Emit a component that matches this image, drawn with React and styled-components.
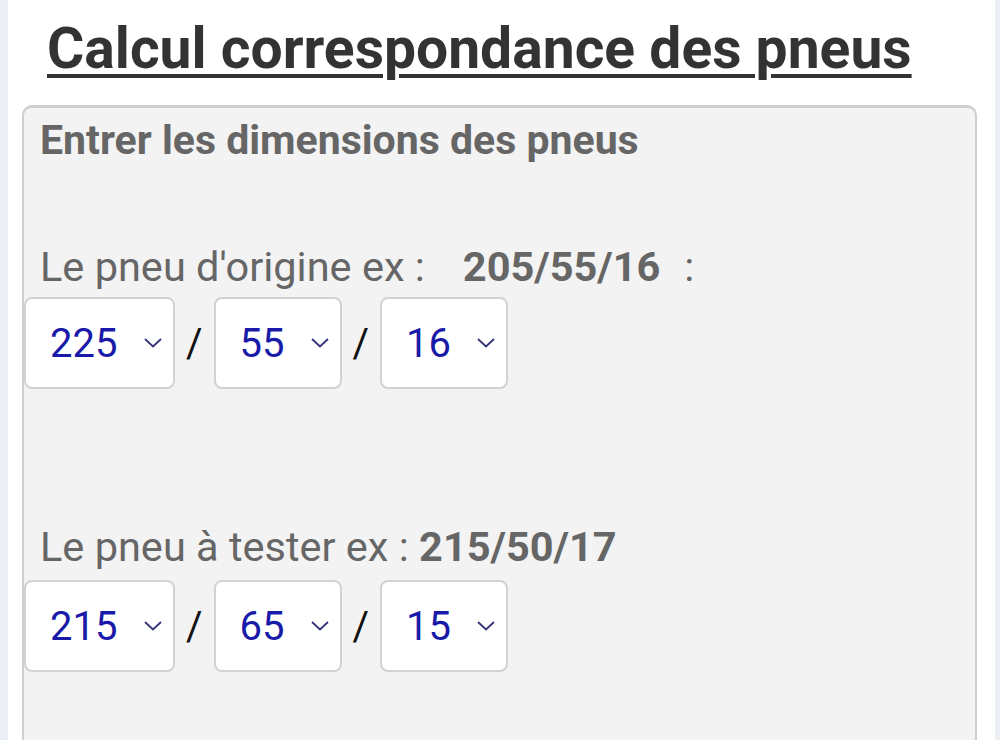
import styled, { createGlobalStyle } from 'styled-components';

const GlobalStyle = createGlobalStyle`
    body {
        margin: 0;
        background: #eceff4;
        font-family: Roboto, "Liberation Sans", sans-serif;
    }
`;

const Page = styled.div`
    margin: 0 5px 0 8px;
    background: #fff;
    min-height: 740px;
    padding: 0 18px 0 14px;
    overflow: hidden;
`;

const Title = styled.h2`
    margin: 15px 0 22px 25px;
    font-size: 57px;
    font-weight: 700;
    color: #333;
    text-decoration: underline;
    text-decoration-thickness: 4px;
    text-underline-offset: 6px;
    line-height: 1.2;
`;

const Panel = styled.div`
    background: #f3f3f3;
    border: 2px solid #cfcfcf;
    border-top-width: 3px;
    border-radius: 10px;
    min-height: 700px;
`;

const PanelTitle = styled.h3`
    margin: 0;
    padding: 8px 16px 0;
    font-size: 41px;
    font-weight: 700;
    color: #666;
    line-height: 1.2;
`;

const Label = styled.div`
    padding: 0 16px;
    margin-top: ${props => props.top}px;
    font-size: 41.5px;
    color: #666;
    line-height: 1.2;
`;

const Example = styled.b`
    font-weight: 700;
    margin-left: ${props => props.gap}px;
`;

const Colon = styled.span`
    margin-left: 24px;
`;

const Row = styled.div`
    display: flex;
    align-items: center;
    margin-top: ${props => props.top}px;
`;

const SelectWrap = styled.div`
    position: relative;
`;

const Select = styled.select`
    appearance: none;
    -webkit-appearance: none;
    font-family: Roboto, "Liberation Sans", sans-serif;
    font-size: 40px;
    color: #1a1aa8;
    background: #fff;
    border: 2px solid #d2d2d2;
    border-radius: 8px;
    height: 92px;
    padding: 0 55px 0 24px;
    outline: none;
`;

const Chevron = styled.svg`
    position: absolute;
    right: 13px;
    top: 50%;
    margin-top: -5px;
    pointer-events: none;
`;

const Slash = styled.span`
    font-size: 40px;
    color: #111;
    margin: 0 11px;
`;

const Arrow = () => (
    <Chevron width="18" height="10" viewBox="0 0 18 10">
        <polyline points="1,1 9,8.5 17,1" fill="none" stroke="#33337a" strokeWidth="1.8" />
    </Chevron>
);

const TireSelect = ({ value, options }) => (
    <SelectWrap>
        <Select defaultValue={value}>
            {options.map(o => <option key={o} value={o}>{o}</option>)}
        </Select>
        <Arrow />
    </SelectWrap>
);

const widths = ['155', '165', '175', '185', '195', '205', '215', '225', '235', '245'];
const ratios = ['35', '40', '45', '50', '55', '60', '65', '70', '75', '80'];
const rims = ['13', '14', '15', '16', '17', '18', '19', '20'];

const TireRow = ({ top, w, r, d }) => (
    <Row top={top}>
        <TireSelect value={w} options={widths} />
        <Slash>/</Slash>
        <TireSelect value={r} options={ratios} />
        <Slash>/</Slash>
        <TireSelect value={d} options={rims} />
    </Row>
);

const App = () => {
    return (
        <>
            <GlobalStyle />
            <Page>
                <Title>Calcul correspondance des pneus</Title>
                <Panel>
                    <PanelTitle>Entrer les dimensions des pneus</PanelTitle>
                    <Label top={76}>
                        Le pneu d'origine ex :<Example gap={38}>205/55/16</Example>
                        <Colon>:</Colon>
                    </Label>
                    <TireRow top={6} w="225" r="55" d="16" />
                    <Label top={133}>
                        Le pneu à tester ex : <Example gap={0}>215/50/17</Example>
                    </Label>
                    <TireRow top={8} w="215" r="65" d="15" />
                </Panel>
            </Page>
        </>
    );
};

export default App;
